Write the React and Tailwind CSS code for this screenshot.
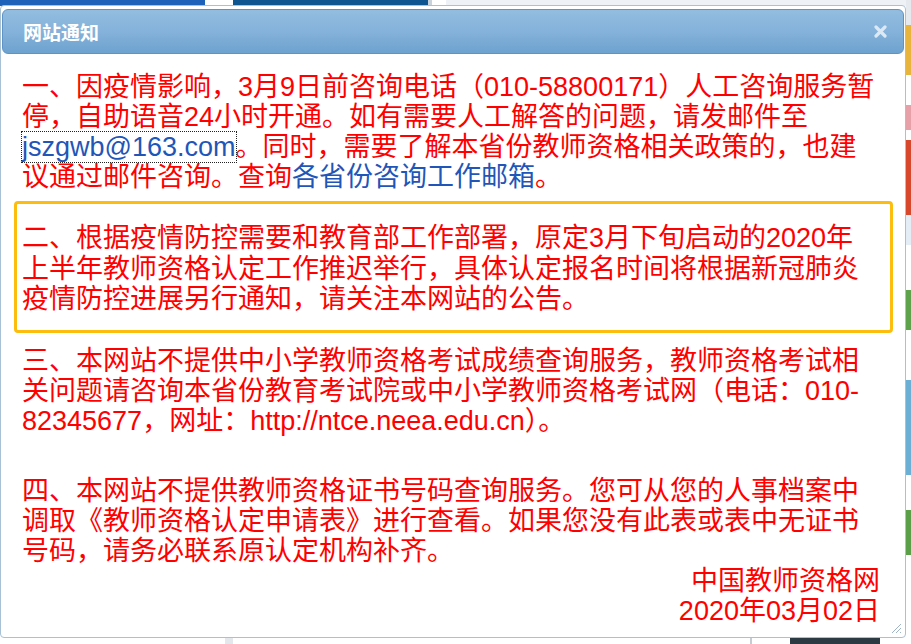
import React from 'react'

const bodyFont = { fontFamily: '"Liberation Sans", Arial, "Noto Sans CJK SC", sans-serif' }

function CloseIcon() {
    return (
        <svg width="13" height="13" viewBox="0 0 13 13" className="block">
            <path d="M2 2 L11 11 M11 2 L2 11" stroke="#dce8f4" strokeWidth="3.2" strokeLinecap="round" />
        </svg>
    )
}

function Grip() {
    return (
        <svg width="12" height="12" viewBox="0 0 12 12" className="absolute right-[3px] bottom-[3px]">
            <path d="M11 2 L2 11 M11 6 L6 11 M11 10 L10 11" stroke="#9fb4c6" strokeWidth="1" />
        </svg>
    )
}

// page behind the dialog: only thin strips stay visible
function Backdrop() {
    return (
        <div className="absolute inset-0">
            <div className="flex h-[6px]">
                <div className="w-[205px] bg-[#1f62b9]" />
                <div className="w-[28px] bg-white" />
                <div className="w-[195px] bg-[#0f5690]" />
                <div className="w-[4px] bg-[#c9d3dc]" />
                <div className="w-[14px] bg-white" />
                <div className="flex-1 bg-[#eef2f7]" />
            </div>
            <div className="absolute right-0 top-0 w-[5px] h-full flex flex-col">
                <div className="h-[25px] bg-[#e6e9ee]" />
                <div className="h-[50px] bg-[#e9b43c]" />
                <div className="h-[30px] bg-white" />
                <div className="h-[25px] bg-[#e7a0a8]" />
                <div className="h-[10px] bg-white" />
                <div className="h-[75px] bg-[#d8472c]" />
                <div className="h-[30px] bg-[#e4ecf5]" />
                <div className="h-[45px] bg-white" />
                <div className="h-[40px] bg-[#5ea34b]" />
                <div className="h-[50px] bg-white" />
                <div className="h-[95px] bg-[#6bb0d4]" />
                <div className="h-[35px] bg-white" />
                <div className="h-[45px] bg-[#5c9f49]" />
                <div className="flex-1 bg-white" />
            </div>
            <div className="absolute left-0 bottom-0 w-full h-[6px] flex">
                <div className="w-[225px] bg-white" />
                <div className="w-[8px] bg-[#e4e8ec]" />
                <div className="w-[517px] bg-white" />
                <div className="w-[2px] bg-[#c7ccd2]" />
                <div className="w-[38px] bg-white" />
                <div className="w-[90px] bg-[#2c3a44]" />
                <div className="flex-1 bg-white" />
            </div>
        </div>
    )
}

export default function App() {
    return (
        <div className="relative w-[911px] h-[644px] overflow-hidden bg-white">
            <Backdrop />

            <div className="absolute left-0 top-[5px] w-[906px] h-[633px] bg-white border border-[#a9c1d4] rounded-[4px] flex flex-col">
                {/* title bar */}
                <div className="mx-[1px] mt-[3px] h-[45px] rounded-[6px] border border-[#5f93c3] bg-gradient-to-b from-[#93bde0] via-[#84b2da] to-[#6ea2cf] flex items-center justify-between pl-[20px] pr-[16px]">
                    <span
                        className="text-white font-bold text-[19px] leading-none"
                        style={{ fontFamily: '"Noto Sans CJK SC", sans-serif' }}
                    >
                        网站通知
                    </span>
                    <CloseIcon />
                </div>

                {/* notice body */}
                <div className="flex flex-col pl-[13px] pr-[12px] pt-[18px] text-[27px] leading-[30px] text-[#f00] whitespace-nowrap" style={bodyFont}>
                    <p className="pl-[8px]">
                        一、因疫情影响，3月9日前咨询电话（010-58800171）人工咨询服务暂<br />
                        停，自助语音24小时开通。如有需要人工解答的问题，请发邮件至<br />
                        <span className="text-[#1f56b8] outline-1 outline-dotted outline-[#222]">jszgwb@163.com</span>。同时，需要了解本省份教师资格相关政策的，也建<br />
                        议通过邮件咨询。查询<span className="text-[#1f56b8]">各省份咨询工作邮箱</span>。
                    </p>

                    <div className="mt-[9px] border-[3px] border-[#fdbd0e] rounded-[4px] pl-[5px] pt-[19px] pb-[15px] leading-[30.5px]">
                        <p>
                            二、根据疫情防控需要和教育部工作部署，原定3月下旬启动的2020年<br />
                            上半年教师资格认定工作推迟举行，具体认定报名时间将根据新冠肺炎<br />
                            疫情防控进展另行通知，请关注本网站的公告。
                        </p>
                    </div>

                    <p className="pl-[8px] mt-[13px]">
                        三、本网站不提供中小学教师资格考试成绩查询服务，教师资格考试相<br />
                        关问题请咨询本省份教育考试院或中小学教师资格考试网（电话：010-<br />
                        82345677，网址：http://ntce.neea.edu.cn）。
                    </p>

                    <p className="pl-[8px] mt-[40px]">
                        四、本网站不提供教师资格证书号码查询服务。您可从您的人事档案中<br />
                        调取《教师资格认定申请表》进行查看。如果您没有此表或表中无证书<br />
                        号码，请务必联系原认定机构补齐。
                    </p>

                    <p className="text-right pr-[13px]">
                        中国教师资格网<br />
                        2020年03月02日
                    </p>
                </div>

                <Grip />
            </div>
        </div>
    )
}
